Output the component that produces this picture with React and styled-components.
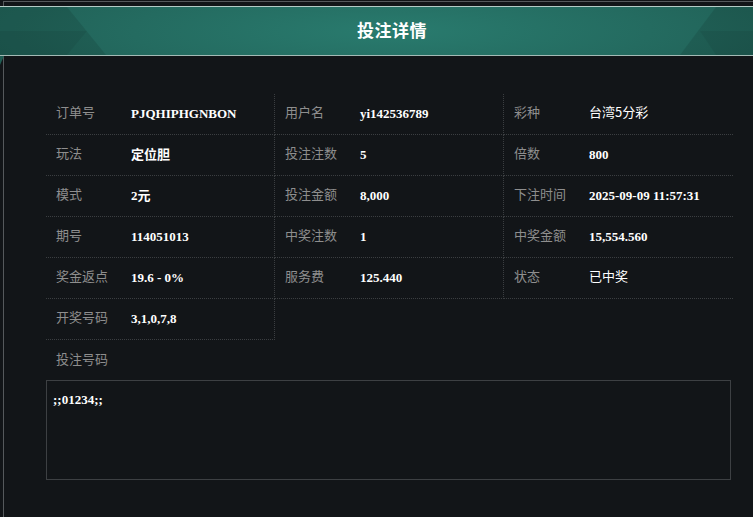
import React from "react";
import styled, { createGlobalStyle } from "styled-components";

const Global = createGlobalStyle`
  html, body {
    margin: 0;
    padding: 0;
    background: #121518;
    overflow: hidden;
  }
  * { box-sizing: border-box; }
`;

const Modal = styled.div`
  position: relative;
  width: 776px;
  min-height: 520px;
  margin: 1px 0 0 3px;
  border-top: 1px solid #55595c;
  border-left: 1px solid #55595c;
  background: #121518;
`;

const Header = styled.div`
  position: relative;
  margin: 4px 0 0 -4px;
  width: 784px;
  height: 50px;
  border-top: 1px solid #b4cbc6;
  border-bottom: 1px solid #a3bab5;
  background: radial-gradient(ellipse 60% 160% at 50% 50%, #297b6e 0%, #246b60 55%, #1f5d53 100%);
  display: flex;
  align-items: center;
  justify-content: center;

  &::after {
    content: "";
    position: absolute;
    left: 0;
    top: calc(100% + 1px);
    width: 0;
    height: 0;
    border-top: 9px solid #1f5d53;
    border-right: 4px solid transparent;
  }
`;

const Deco = styled.svg`
  position: absolute;
  inset: 0;
  width: 100%;
  height: 100%;
`;

const Title = styled.h1`
  position: relative;
  margin: -3px 0 0;
  color: #ffffff;
  font: bold 17px/20px "Noto Sans CJK SC", sans-serif;
  letter-spacing: 0.5px;
`;

const Body = styled.div`
  padding: 38px 0 40px 42px;
`;

const Table = styled.div`
  display: grid;
  grid-template-columns: 229px 229px 229px;
  width: 687px;
`;

const Cell = styled.div`
  display: flex;
  align-items: center;
  height: 41px;
  padding-bottom: 1px;
  border-bottom: 1px dotted #3b3e41;
  border-right: ${(p) => (p.$last ? "none" : "1px dotted #3b3e41")};
`;

const Label = styled.span`
  flex: 0 0 85px;
  padding-left: 10px;
  color: #8e8e8e;
  font: 13px/16px "Noto Sans CJK SC", sans-serif;
  margin-top: -3px;
`;

const Value = styled.span`
  color: #ffffff;
  font-size: 13px;
  line-height: 16px;
  font-weight: ${(p) => (p.$plain ? "normal" : "bold")};
  font-family: ${(p) =>
    p.$plain
      ? `"Noto Sans CJK SC", sans-serif`
      : `"Liberation Serif", "Noto Sans CJK SC", serif`};
  margin-top: ${(p) => (p.$plain ? "-3px" : "0")};
`;

const SectionLabel = styled.div`
  height: 40px;
  display: flex;
  align-items: center;
  padding-left: 10px;
  color: #8e8e8e;
  font: 13px/16px "Noto Sans CJK SC", sans-serif;
  padding-bottom: 3px;
`;

const Numbers = styled.div`
  width: 685px;
  height: 100px;
  border: 1px solid #3d4043;
  padding: 10px 6px;
  color: #ffffff;
  font: bold 13px/18px "Liberation Serif", serif;
`;

const rows = [
  [["订单号", "PJQHIPHGNBON"], ["用户名", "yi142536789"], ["彩种", "台湾5分彩", true]],
  [["玩法", "定位胆"], ["投注注数", "5"], ["倍数", "800"]],
  [["模式", "2元"], ["投注金额", "8,000"], ["下注时间", "2025-09-09 11:57:31"]],
  [["期号", "114051013"], ["中奖注数", "1"], ["中奖金额", "15,554.560"]],
  [["奖金返点", "19.6 - 0%"], ["服务费", "125.440"], ["状态", "已中奖", true]],
  [["开奖号码", "3,1,0,7,8"]],
];

export default function App() {
  return (
    <>
      <Global />
      <Modal>
        <Header>
          <Deco viewBox="0 0 784 48" preserveAspectRatio="none">
            <polygon points="0,0 67,0 106,48 0,48" fill="rgba(0,0,0,0.10)" />
            <polygon points="0,24 87,24 67,48 0,48" fill="rgba(0,0,0,0.06)" />
            <polygon points="716,0 784,0 784,48 680,48" fill="rgba(0,0,0,0.10)" />
            <polygon points="700,24 784,24 784,48 716,48" fill="rgba(0,0,0,0.06)" />
          </Deco>
          <Title>投注详情</Title>
        </Header>
        <Body>
          <Table>
            {rows.flatMap((row, ri) =>
              row.map(([label, value, plain], ci) => (
                <Cell key={`${ri}-${ci}`} $last={ci === 2}>
                  <Label>{label}</Label>
                  <Value $plain={plain}>{value}</Value>
                </Cell>
              ))
            )}
          </Table>
          <SectionLabel>投注号码</SectionLabel>
          <Numbers>;;01234;;</Numbers>
        </Body>
      </Modal>
    </>
  );
}
